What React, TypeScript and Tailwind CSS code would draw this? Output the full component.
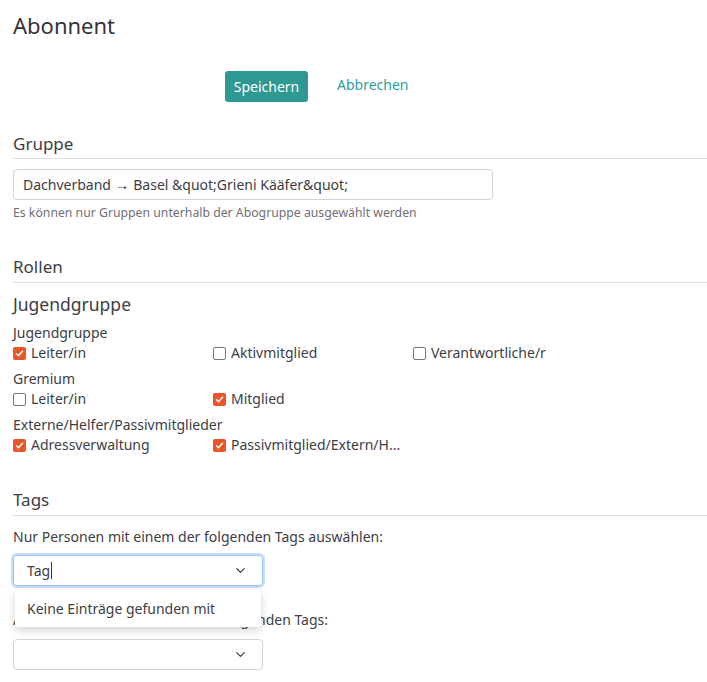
import { ChevronDown } from "lucide-react";

type Role = { label: string; checked: boolean };

const groups: { title: string; roles: Role[] }[] = [
  {
    title: "Jugendgruppe",
    roles: [
      { label: "Leiter/in", checked: true },
      { label: "Aktivmitglied", checked: false },
      { label: "Verantwortliche/r", checked: false },
    ],
  },
  {
    title: "Gremium",
    roles: [
      { label: "Leiter/in", checked: false },
      { label: "Mitglied", checked: true },
    ],
  },
  {
    title: "Externe/Helfer/Passivmitglieder",
    roles: [
      { label: "Adressverwaltung", checked: true },
      { label: "Passivmitglied/Extern/H...", checked: true },
    ],
  },
];

function Checkbox({ checked }: { checked: boolean }) {
  if (checked) {
    return (
      <span className="flex size-[13px] shrink-0 items-center justify-center rounded-[2px] bg-[#e8572a]">
        <svg viewBox="0 0 12 12" className="size-[9px]" fill="none">
          <path d="M2 6.4 4.6 9 10 3" stroke="white" strokeWidth="1.9" strokeLinecap="round" strokeLinejoin="round" />
        </svg>
      </span>
    );
  }
  return <span className="size-[13px] shrink-0 rounded-[2px] border-[1.5px] border-[#77777f] bg-white" />;
}

function SectionHeading({ children, className }: { children: string; className: string }) {
  return (
    <div className={`border-b border-[#dedede] pb-[2px] text-[17px] leading-[24px] text-[#3d3d45] ${className}`}>
      {children}
    </div>
  );
}

export default function App() {
  return (
    <div
      className="min-h-[682px] w-[707px] bg-white pl-[13px] pt-[13px] text-[14px] text-[#3d3d45]"
      style={{ fontFamily: '"Noto Sans", "Open Sans", sans-serif' }}
    >
      <h1 className="text-[22px] leading-[24px] font-normal text-[#33333b]">Abonnent</h1>

      <div className="mt-[34px] flex items-center pl-[212px]">
        <button className="h-[31px] w-[83px] rounded-[3px] bg-[#2e9892] text-[14px] text-white">Speichern</button>
        <span className="ml-[29px] -mt-[4px] text-[14px] text-[#2c9e99]">Abbrechen</span>
      </div>

      <SectionHeading className="mt-[30px]">Gruppe</SectionHeading>
      <div className="mt-[10px] flex h-[31px] w-[480px] items-center whitespace-pre rounded-[4px] border border-[#cfd3d8] px-[9px]">
        Dachverband <span className="text-[15px] leading-none">→</span> Basel &amp;quot;Grieni Kääfer&amp;quot;
      </div>
      <div className="mt-[5px] text-[12.25px] leading-[16px] text-[#6f6f76]">
        Es können nur Gruppen unterhalb der Abogruppe ausgewählt werden
      </div>

      <SectionHeading className="mt-[34px] pb-[3px]">Rollen</SectionHeading>
      <div className="mt-[9px] text-[17.5px] leading-[24px]">Jugendgruppe</div>
      <div className="mt-[7px]">
        {groups.map((g, i) => (
          <div key={g.title} className={i > 0 ? "mt-[6px]" : ""}>
            <div className="leading-[20px]">{g.title}</div>
            <div className="grid grid-cols-[200px_200px_200px] leading-[20px]">
              {g.roles.map((r) => (
                <div key={r.label} className="flex items-center gap-[5px]">
                  <Checkbox checked={r.checked} />
                  <span>{r.label}</span>
                </div>
              ))}
            </div>
          </div>
        ))}
      </div>

      <SectionHeading className="mt-[33px] pb-[3px]">Tags</SectionHeading>
      <div className="mt-[11px] leading-[20px]">Nur Personen mit einem der folgenden Tags auswählen:</div>
      <div className="relative mt-[8px] w-[250px]">
        <div className="flex h-[31px] items-center rounded-[4px] border border-[#9ec2f5] pl-[13px] pr-[14px] shadow-[0_0_0_2px_#c7dcfb]">
          <span>Tag</span>
          <span className="ml-[1px] h-[17px] w-px bg-[#33333b]" />
          <ChevronDown className="ml-auto size-[15px] text-[#3d3d45]" strokeWidth={2} />
        </div>
        <div className="absolute left-[2px] top-[35px] z-10 flex h-[37px] w-[246px] items-center rounded-[4px] bg-white pl-[12px] shadow-[0_3px_10px_rgba(0,0,0,0.18)]">
          Keine Einträge gefunden mit
        </div>
      </div>
      <div className="mt-[24px] leading-[20px]">Ausser Personen mit einem der folgenden Tags:</div>
      <div className="mt-[9px] flex h-[31px] w-[250px] items-center rounded-[4px] border border-[#cfd3d8] pr-[14px]">
        <ChevronDown className="ml-auto size-[15px] text-[#3d3d45]" strokeWidth={2} />
      </div>
    </div>
  );
}
